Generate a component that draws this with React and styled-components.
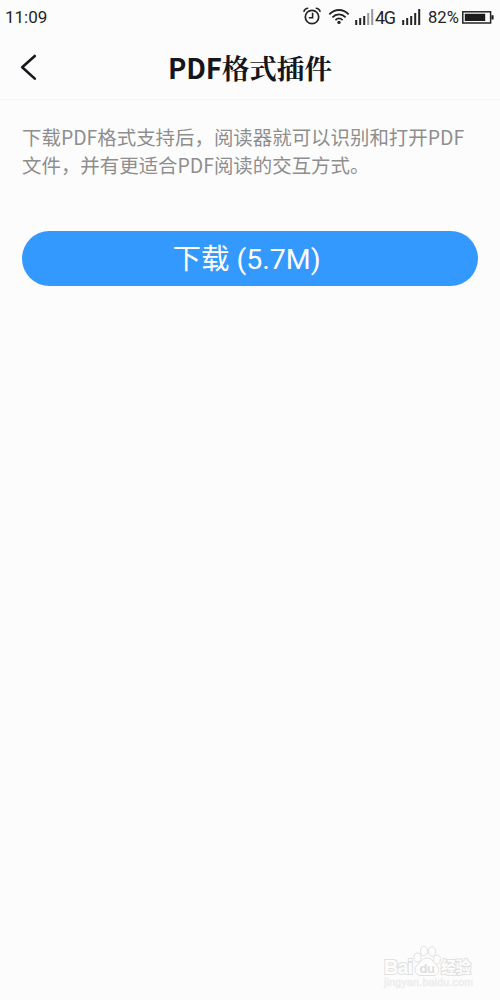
import React from "react"
import styled, { createGlobalStyle } from "styled-components"

const GlobalStyle = createGlobalStyle`
  * {
    box-sizing: border-box;
  }

  body {
    margin: 0;
    background: #fcfcfc;
  }
`

const Screen = styled.div`
  position: relative;
  display: flex;
  flex-direction: column;
  width: 500px;
  height: 1000px;
  overflow: hidden;
  background: #fcfcfc;
`

const StatusBar = styled.header`
  display: flex;
  align-items: center;
  justify-content: space-between;
  height: 35px;
  padding: 0 5px;
  font: 17px/35px Roboto, sans-serif;
  color: #242424;
`

const StatusIcons = styled.div`
  display: flex;
  align-items: center;

  svg {
    display: block;
    flex: none;
  }
`

const Indicators = styled.div`
  display: flex;
  align-items: center;
  gap: 7px;
  margin-right: 5px;
  padding-bottom: 3px;
`

const Network = styled.span`
  width: 28px;
  padding-left: 1px;
  font-size: 18px;
  line-height: 33px;
  letter-spacing: -1.4px;
`

const Battery = styled.span`
  width: 34px;
  margin-left: 7px;
  font-size: 16.6px;
  white-space: nowrap;
`

const NavBar = styled.nav`
  display: grid;
  grid-template-columns: 60px 1fr 60px;
  align-items: center;
  height: 65px;
  border-bottom: 1px solid #f4f4f4;
`

const BackButton = styled.button`
  display: flex;
  padding: 0 0 1px 16px;
  border: 0;
  background: none;
`

const Title = styled.h1`
  margin: 0;
  font: bold 27.6px/64px "Noto Sans CJK SC", sans-serif;
  letter-spacing: -0.2px;
  text-align: center;
  white-space: nowrap;
  color: #14161c;

  span {
    font-family: "Noto Serif CJK SC", "Noto Sans CJK SC", serif;
    letter-spacing: 0;
  }
`

const Content = styled.main`
  padding: 23px 22px 0;
`

const Description = styled.p`
  margin: 0;
  font: 19.45px/28px "Noto Sans CJK SC", sans-serif;
  white-space: nowrap;
  color: #8e8e8e;
`

const DownloadButton = styled.button`
  display: block;
  width: 456px;
  height: 55.5px;
  margin-top: 51.5px;
  padding: 1px 7px 0 0;
  border: 0;
  border-radius: 28px;
  background: #3399ff;
  font: 28.5px/55px Roboto, "Noto Sans CJK SC", sans-serif;
  color: #fff;
`

const Watermark = styled.div`
  position: absolute;
  left: 382px;
  top: 943px;
`

const BackIcon = () => (
  <svg width="24" height="30" viewBox="0 0 24 30" fill="none">
    <path
      d="M18.8 4 6.2 15.2 18.8 26.6"
      stroke="#15171c"
      strokeWidth="2.6"
      strokeLinecap="round"
      strokeLinejoin="round"
    />
  </svg>
)

const AlarmIcon = () => (
  <svg width="18" height="20" viewBox="0 0 18 20" fill="none" stroke="#242424">
    <circle cx="9" cy="11" r="6.7" strokeWidth="1.7" />
    <path d="M9.600 6.800v5H5.800" strokeWidth="1.600" />
    <path
      d="M1 5.2C1.4 3.500 2.800 2.500 4.700 2.200M17 5.200c-.4-1.700-1.800-2.700-3.700-3"
      strokeWidth="1.6"
      strokeLinecap="round"
    />
  </svg>
)

const WifiIcon = () => (
  <svg width="22" height="20" viewBox="0 0 22 20" fill="none" stroke="#242424">
    <path
      d="M1.3 8.4C6.8 2.5 15.2 2.5 20.7 8.4M4.4 11.3c3.8-3.9 9.4-3.9 13.2 0M7.4 14.1c2.2-2.1 5-2.1 7.2 0"
      strokeWidth="1.8"
    />
    <circle cx="11" cy="16.4" r="1.7" fill="#242424" stroke="none" />
  </svg>
)

const SignalIcon = ({ level }) => (
  <svg width="19" height="17" viewBox="0 0 19 17" fill="#242424">
    {[5, 7, 9, 12, 16].map((height, i) => (
      <rect
        key={height}
        x={0.2 + i * 4}
        y={16 - height}
        width="2"
        height={height}
        fill={i < level ? "#242424" : "#989898"}
      />
    ))}
  </svg>
)

const BatteryIcon = () => (
  <svg width="33" height="14" viewBox="0 0 33 14">
    <rect
      x="0.8"
      y="0.8"
      width="27.8"
      height="11.2"
      fill="none"
      stroke="#242424"
      strokeWidth="1.5"
    />
    <path d="M2.8 2.7h20.4v7.4H2.8zM29.4 4.3h2.2v4.3h-2.2z" fill="#1c1c1c" />
  </svg>
)

const BaiduMark = () => (
  <svg
    width="96"
    height="50"
    viewBox="0 0 96 50"
    fill="#fdfdfd"
    stroke="#e1e1e1"
    strokeWidth="1"
    fontFamily='"Liberation Sans", "Noto Sans CJK SC", sans-serif'
    fontWeight="bold"
  >
    <text x="2" y="31" fontSize="20" textLength="29" paintOrder="stroke" strokeWidth="2">
      Bai
    </text>
    <ellipse cx="35.5" cy="14.5" rx="3.5" ry="4.5" />
    <ellipse cx="42" cy="8" rx="3.6" ry="4.8" />
    <ellipse cx="50" cy="8.5" rx="3.6" ry="4.8" />
    <ellipse cx="55" cy="16.5" rx="3.4" ry="4.4" />
    <path d="M45.500 15c4 0 5.500 3.500 8.500 6.500 5 5 2.500 11-3 11H39c-6 0-8.500-6.500-3-11.500 3.500-3 5-6 9.500-6z" />
    <text x="37.5" y="30" fontSize="13" textLength="15.5" fill="#dedede" stroke="none">
      du
    </text>
    <text x="59" y="30" fontSize="15.5" textLength="30" paintOrder="stroke" strokeWidth="2">
      经验
    </text>
    <text
      x="2"
      y="43"
      fontSize="10.5"
      fontWeight="normal"
      textLength="89"
      fill="#ececec"
      stroke="#ececec"
      strokeWidth="0.4"
    >
      jingyan.baidu.com
    </text>
  </svg>
)

const App = () => (
  <>
    <GlobalStyle />
    <Screen>
      <StatusBar>
        <span>11:09</span>
        <StatusIcons>
          <Indicators>
            <AlarmIcon />
            <WifiIcon />
          </Indicators>
          <SignalIcon level={3} />
          <Network>4G</Network>
          <SignalIcon level={5} />
          <Battery>82%</Battery>
          <BatteryIcon />
        </StatusIcons>
      </StatusBar>
      <NavBar>
        <BackButton aria-label="返回">
          <BackIcon />
        </BackButton>
        <Title>
          PDF<span>格式插件</span>
        </Title>
      </NavBar>
      <Content>
        <Description>
          下载PDF格式支持后，阅读器就可以识别和打开PDF
          <br />
          文件，并有更适合PDF阅读的交互方式。
        </Description>
        <DownloadButton>下载 (5.7M)</DownloadButton>
      </Content>
      <Watermark>
        <BaiduMark />
      </Watermark>
    </Screen>
  </>
)

export default App
